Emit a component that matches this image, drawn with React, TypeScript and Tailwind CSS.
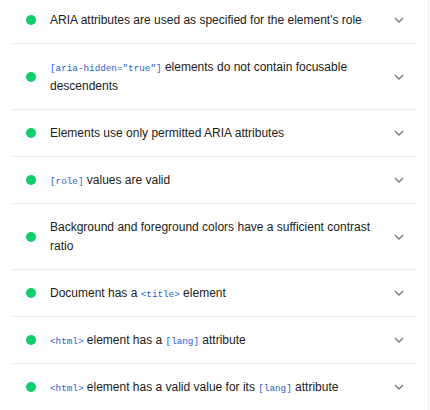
import React from "react";

type Part = string | { c: string };

const rows: Part[][] = [
  ["ARIA attributes are used as specified for the element's role"],
  [{ c: '[aria-hidden="true"]' }, " elements do not contain focusable descendents"],
  ["Elements use only permitted ARIA attributes"],
  [{ c: "[role]" }, " values are valid"],
  ["Background and foreground colors have a sufficient contrast ratio"],
  ["Document has a ", { c: "<title>" }, " element"],
  [{ c: "<html>" }, " element has a ", { c: "[lang]" }, " attribute"],
  [{ c: "<html>" }, " element has a valid value for its ", { c: "[lang]" }, " attribute"],
];

function Chevron() {
  return (
    <svg width="10" height="6" viewBox="0 0 10 6" className="shrink-0">
      <path d="M1 1 L5 5 L9 1" fill="none" stroke="#7a7a7a" strokeWidth="1.4" />
    </svg>
  );
}

export default function App() {
  return (
    <div
      className="w-[430px] h-[410px] overflow-hidden bg-white relative"
      style={{ fontFamily: '"Liberation Sans", Arial, sans-serif' }}
    >
      <div className="absolute right-[1px] top-0 bottom-0 w-px bg-[#f0f0f0]" />
      <div className="ml-[12px] w-[405px] -mt-[3px]">
        {rows.map((parts, i) => (
          <div
            key={i}
            className="flex items-center border-b border-[#ececec] py-[13.5px] pl-[14px] pr-[13px]"
          >
            <div className="w-[10px] h-[10px] rounded-full bg-[#0cce6b] shrink-0" />
            <div className="flex-1 ml-[14px] mr-[16px] text-[12px] leading-[19px] text-[#212121]">
              {parts.map((p, j) =>
                typeof p === "string" ? (
                  <span key={j}>{p}</span>
                ) : (
                  <code
                    key={j}
                    className="text-[9.3px] leading-none text-[#2a5fd0]"
                    style={{ fontFamily: '"Liberation Mono", "DejaVu Sans Mono", monospace' }}
                  >
                    {p.c}
                  </code>
                )
              )}
            </div>
            <Chevron />
          </div>
        ))}
      </div>
    </div>
  );
}
